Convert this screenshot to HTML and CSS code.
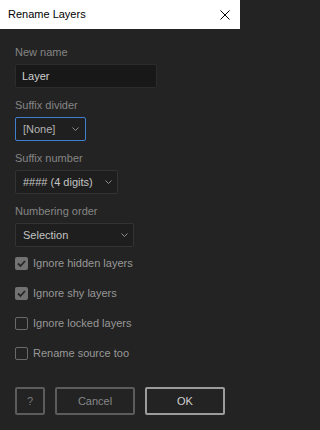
FILE: index.html
```html
<!DOCTYPE html>
<html>
<head>
<meta charset="utf-8">
<link rel="stylesheet" href="styles.css">
</head>
<body>
<div class="dialog">
  <div class="titlebar">
    <span class="title">Rename Layers</span>
    <svg class="close" width="10" height="10" viewBox="0 0 10 10"><path d="M0.5 0.5L9.5 9.5M9.5 0.5L0.5 9.5" stroke="#000" stroke-width="1" fill="none"/></svg>
  </div>
  <div class="content">
    <div class="field">
      <div class="label">New name</div>
      <div class="input">Layer</div>
    </div>
    <div class="field">
      <div class="label">Suffix divider</div>
      <div class="select focus w1"><span class="val">[None]</span><svg class="chev" width="7" height="4" viewBox="0 0 7 4"><path d="M0.5 0.5L3.5 3.5L6.5 0.5" stroke="#8e8e8e" fill="none"/></svg></div>
    </div>
    <div class="field">
      <div class="label">Suffix number</div>
      <div class="select w2"><span class="val">#### (4 digits)</span><svg class="chev" width="7" height="4" viewBox="0 0 7 4"><path d="M0.5 0.5L3.5 3.5L6.5 0.5" stroke="#8e8e8e" fill="none"/></svg></div>
    </div>
    <div class="field">
      <div class="label">Numbering order</div>
      <div class="select w3"><span class="val">Selection</span><svg class="chev" width="7" height="4" viewBox="0 0 7 4"><path d="M0.5 0.5L3.5 3.5L6.5 0.5" stroke="#8e8e8e" fill="none"/></svg></div>
    </div>
    <div class="checks">
      <div class="check"><span class="box on"><svg width="13" height="13" viewBox="0 0 13 13"><path d="M3 6.5L5.5 9L10 4" stroke="#262626" stroke-width="1.8" fill="none"/></svg></span><span class="clabel">Ignore hidden layers</span></div>
      <div class="check"><span class="box on"><svg width="13" height="13" viewBox="0 0 13 13"><path d="M3 6.5L5.5 9L10 4" stroke="#262626" stroke-width="1.8" fill="none"/></svg></span><span class="clabel">Ignore shy layers</span></div>
      <div class="check"><span class="box"></span><span class="clabel">Ignore locked layers</span></div>
      <div class="check"><span class="box"></span><span class="clabel">Rename source too</span></div>
    </div>
    <div class="buttons">
      <div class="btn help">?</div>
      <div class="btn cancel">Cancel</div>
      <div class="btn ok">OK</div>
    </div>
  </div>
</div>
</body>
</html>
```
FILE: styles.css
```css
html, body {
  margin: 0;
  padding: 0;
  background: #232323;
}
.dialog {
  width: 240px;
  height: 430px;
  font-family: "Liberation Sans", Arial, sans-serif;
  font-size: 11px;
  line-height: 13px;
  background: #232323;
}
.titlebar {
  height: 29px;
  background: #ffffff;
  display: flex;
  align-items: center;
  justify-content: space-between;
  padding: 0 10px 0 8px;
  box-sizing: border-box;
}
.title {
  color: #000;
  font-size: 11px;
}
.close {
  display: block;
}
.content {
  padding: 17px 15px 0 15px;
  display: flex;
  flex-direction: column;
}
.field {
  display: flex;
  flex-direction: column;
  align-items: flex-start;
  margin-bottom: 11px;
}
.label {
  color: #858585;
  margin-bottom: 5px;
}
.input {
  width: 142px;
  height: 24px;
  box-sizing: border-box;
  background: #181818;
  border: 1px solid #2c2c2c;
  border-radius: 2px;
  color: #cfcfcf;
  padding: 0 6px;
  display: flex;
  align-items: center;
}
.select {
  height: 24px;
  box-sizing: border-box;
  background: #1e1e1e;
  border: 1px solid #333333;
  border-radius: 2px;
  display: flex;
  align-items: center;
  justify-content: space-between;
  padding: 0 5px 0 7px;
  color: #c4c4c4;
}
.select.focus {
  border-color: #3f7fd0;
  background: #1f1f1f;
  padding-right: 6px;
}
.select.focus .val {
  color: #b3b3b3;
}
.w1 { width: 71px; }
.w2 { width: 103px; }
.w3 { width: 119px; }
.chev {
  display: block;
}
.checks {
  display: flex;
  flex-direction: column;
  gap: 17px;
  margin-top: -1px;
}
.check {
  display: flex;
  align-items: center;
  gap: 5px;
  height: 13px;
}
.box {
  width: 13px;
  height: 13px;
  box-sizing: border-box;
  border: 1.5px solid #6a6a6a;
  border-radius: 2px;
  display: block;
  flex: none;
}
.box.on {
  background: #727272;
  border: none;
}
.box svg {
  display: block;
}
.clabel {
  color: #989898;
}
.buttons {
  display: flex;
  gap: 10px;
  margin-top: 27px;
}
.btn {
  height: 28px;
  box-sizing: border-box;
  border: 2px solid #5c5c5c;
  border-radius: 2px;
  display: flex;
  align-items: center;
  justify-content: center;
  color: #888888;
}
.help { width: 30px; color: #7a7a7a; }
.cancel { width: 80px; }
.ok {
  width: 80px;
  border-color: #9c9c9c;
  color: #d0d0d0;
}
```
